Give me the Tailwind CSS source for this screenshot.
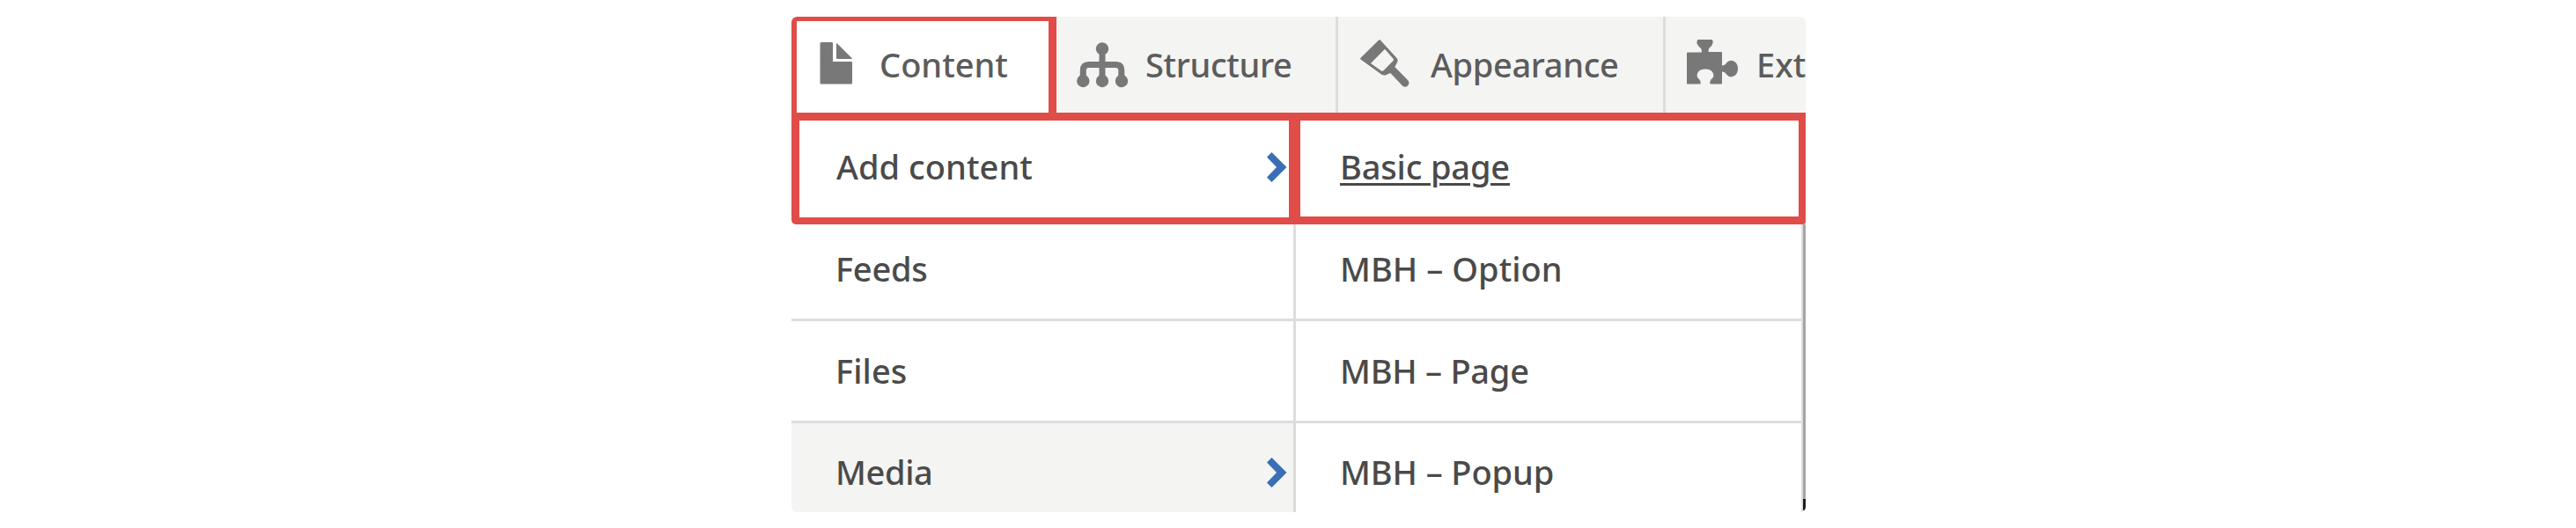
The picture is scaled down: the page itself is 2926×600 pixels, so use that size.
<!DOCTYPE html>
<html lang="en">
<head>
<meta charset="utf-8">
<title>Admin menu</title>
<script src="https://cdn.jsdelivr.net/npm/@tailwindcss/browser@4"></script>
</head>
<body class="bg-white">
<main class="ml-[899px] mt-[19px] w-[1152px] h-[563px] rounded-[6px] overflow-hidden bg-white font-['Noto_Sans',sans-serif] font-medium text-[38px] leading-[40px] text-[#4a4a4a] whitespace-nowrap">
  <nav class="flex h-[109px] bg-[#f4f4f3] text-[#5c5c5c]">
    <a class="flex shrink-0 w-[301px] border-[#e04d49] border-t-[5px] border-l-[6px] border-r-[9px] rounded-tl-[6px] bg-white pl-[24px]">
      <svg class="mt-[19px] w-[60px] h-[60px] shrink-0" viewBox="929 43 60 60" fill="#787878"><path d="M933 48h12q1 0 1 1v21h21q1 0 1 1v23.500q0 1-1 1h-34q-1.500 0-1.500-1.500v-44.500q0-1.500 1.500-1.500zM950 50q0-1 1-.5l16.500 16.500q.8 1-.5 1h-16q-1 0-1-1z"/></svg>
      <span class="mt-[29px] ml-[10px]">Content</span>
    </a>
    <a class="flex shrink-0 w-[320px] border-r-[3px] border-[#dddddd] pl-[20px]">
      <svg class="mt-[24px] w-[64px] h-[60px] shrink-0" viewBox="1220 43 64 60" fill="#787878"><circle cx="1252" cy="55.500" r="7.200"/><circle cx="1230.300" cy="92" r="7.200"/><circle cx="1252" cy="92" r="7.200"/><circle cx="1274" cy="92" r="7.200"/><path d="M1252 55v37M1230.300 92v-12q0-6.500 6.500-6.500h30.500q6.500 0 6.500 6.500v12" fill="none" stroke="#787878" stroke-width="7"/></svg>
      <span class="mt-[34px] ml-[17px] tracking-[-0.35px]">Structure</span>
    </a>
    <a class="flex shrink-0 w-[372px] border-r-[3px] border-[#dddddd] pl-[22px]">
      <svg class="mt-[24px] w-[62px] h-[60px] shrink-0" viewBox="1542 43 62 60" fill="#787878"><path fill-rule="evenodd" d="M1566.200 45.500q.8-.8 1.600 0L1587 66.500q1.200 2 0 4.500L1584.300 76 1599.500 91.500q2 3-.3 5.700-2.700 2.800-5.700.8L1579.300 83 1574 85.300q-3.500.8-6-1.600L1545.500 67.500q-.8-.8 0-1.800zM1573 55.700L1557 72 1569 80.500q1.500.8 3-.7L1582.500 69q1-1.200 0-2.300z"/></svg>
      <span class="mt-[34px] ml-[21px] tracking-[-0.35px]">Appearance</span>
    </a>
    <a class="flex shrink-0 pl-[22px]">
      <svg class="mt-[24px] w-[62px] h-[60px] shrink-0" viewBox="1914 43 62 60" fill="#787878"><path d="M1929 45h15q2 0 1.500 4-.5 3-4 5.500-1 1-1 4.500h14.500q1 0 1 1v14.500q3.500 0 5-3 3-3.500 7-2.500 6 2 6 9t-6 9q-4 1-7-2.500-1.500-3-5-3v13q0 1-1 1h-12.500q-1-4 2.500-6.500 2-2 1-5.500-2-5-9-5t-9 5q-1 3.500 1 5.500 3.500 3 2.500 6.500h-15q-.5 0-.5-1v-34q0-1 1-1h16q0-3.500-1-4.500-3.500-2.500-4.500-5.500-.5-4 1.500-4.500z"/></svg>
      <span class="mt-[34px] ml-[19px]">Extend</span>
    </a>
  </nav>
  <div class="flex h-[127px]">
    <div class="flex w-[571px] shrink-0 justify-between border-[#e04d49] border-t-[9px] border-b-[8px] border-l-[9px] border-r-[6px] rounded-bl-[5px] pl-[42px] pr-[2px]">
      <span class="mt-[32px] tracking-[0.05px]">Add content</span>
      <svg class="mt-[35px] w-[24px] h-[36px]" viewBox="0 0 24 36" fill="#3a6fb5"><path d="M6.500 1l17 17-17 17L1 29.500 12 18 1 6.500z"/></svg>
    </div>
    <div class="w-[581px] shrink-0 border-[#e04d49] border-t-[9px] border-b-[9px] border-l-[7px] border-r-[8px] rounded-br-[3px] pl-[45px] pt-[32px]"><span class="tracking-[-0.15px] underline decoration-[3px] underline-offset-[4px]">Basic page</span></div>
  </div>
  <div class="flex h-[327px]">
    <div class="w-[573px] shrink-0 border-r-[3px] border-[#dddddd]">
      <div class="h-[110px] border-b-[3px] border-[#dddddd] pl-[50px] pt-[30px]"><span class="tracking-[-0.25px]">Feeds</span></div>
      <div class="h-[116px] border-b-[3px] border-[#dddddd] pl-[50px] pt-[36px]"><span class="tracking-[0.1px]">Files</span></div>
      <div class="flex h-[101px] justify-between bg-[#f4f4f3] pl-[50px] pr-[7px]"><span class="mt-[35px] tracking-[-0.35px]">Media</span>
        <svg class="mt-[38px] w-[24px] h-[36px]" viewBox="0 0 24 36" fill="#3a6fb5"><path d="M6.500 1l17 17-17 17L1 29.500 12 18 1 6.500z"/></svg></div>
    </div>
    <div class="w-[576px] shrink-0 border-r-[2px] border-[#dddddd]">
      <div class="h-[110px] border-b-[3px] border-[#dddddd] pl-[50px] pt-[30px]"><span class="tracking-[0.05px]">MBH – Option</span></div>
      <div class="h-[116px] border-b-[3px] border-[#dddddd] pl-[50px] pt-[36px]"><span class="tracking-[-0.25px]">MBH – Page</span></div>
      <div class="h-[101px] pl-[50px] pt-[35px]"><span class="tracking-[-0.1px]">MBH – Popup</span></div>
    </div>
    <div class="w-[3px]"><div class="h-[312px] bg-[#a5a5a8]"></div><div class="h-[13px] bg-[#1c1c22]"></div></div>
  </div>
</main>
</body>
</html>
